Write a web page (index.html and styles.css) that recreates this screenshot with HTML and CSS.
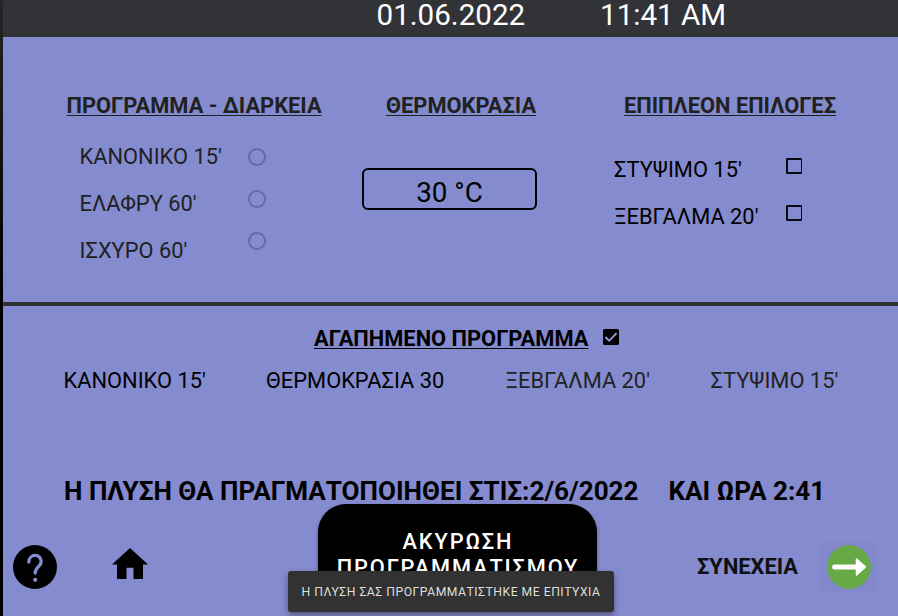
FILE: index.html
```html
<!DOCTYPE html>
<html lang="el">
<head>
<meta charset="utf-8">
<title>Πλυντήριο</title>
<link rel="stylesheet" href="styles.css">
</head>
<body>
<div class="screen">
  <header class="topbar"><span class="date">01.06.2022</span><span class="time">11:41 AM</span></header>
  <section class="settings">
    <div class="programs">
      <h2><span>ΠΡΟΓΡΑΜΜΑ - ΔΙΑΡΚΕΙΑ</span></h2>
      <div class="choices">
        <ul class="labels"><li>ΚΑΝΟΝΙΚΟ 15'</li><li>ΕΛΑΦΡΥ 60'</li><li>ΙΣΧΥΡΟ 60'</li></ul>
        <div class="radios"><i class="radio"></i><i class="radio"></i><i class="radio"></i></div>
      </div>
    </div>
    <div class="temperature">
      <h2><span>ΘΕΡΜΟΚΡΑΣΙΑ</span></h2>
      <div class="temp-value">30 °C</div>
    </div>
    <div class="extras">
      <h2><span>ΕΠΙΠΛΕΟΝ ΕΠΙΛΟΓΕΣ</span></h2>
      <div class="choices">
        <ul class="labels"><li>ΣΤΥΨΙΜΟ 15'</li><li>ΞΕΒΓΑΛΜΑ 20'</li></ul>
        <div class="checks"><i class="check"></i><i class="check"></i></div>
      </div>
    </div>
  </section>
  <section class="favorite">
    <div class="fav-title">
      <h2><span>ΑΓΑΠΗΜΕΝΟ ΠΡΟΓΡΑΜΜΑ</span></h2>
      <svg class="checked" viewBox="0 0 16 16"><rect width="16" height="16" rx="1.6"/><path d="M2.4 8 6.2 11.8 13.6 4.2" fill="none" stroke="#9a9fe0" stroke-width="1.8"/></svg>
    </div>
    <div class="fav-items"><span>ΚΑΝΟΝΙΚΟ 15'</span><span>ΘΕΡΜΟΚΡΑΣΙΑ 30</span><span class="off">ΞΕΒΓΑΛΜΑ 20'</span><span class="off">ΣΤΥΨΙΜΟ 15'</span></div>
  </section>
  <p class="notice"><span class="notice-day">Η ΠΛΥΣΗ ΘΑ ΠΡΑΓΜΑΤΟΠΟΙΗΘΕΙ ΣΤΙΣ:2/6/2022</span><span class="notice-time">ΚΑΙ ΩΡΑ 2:41</span></p>
  <footer class="actions">
    <svg class="help" viewBox="0 0 44 44"><circle cx="22" cy="22" r="22"/><path d="M15.8 17C16 8.3 28.2 8.3 28.2 16.5C28.2 21.8 22.2 21.5 22.2 28" fill="none" stroke="#858bcf" stroke-width="3.3" stroke-linecap="round"/><circle cx="22.2" cy="34.8" r="2.1" fill="#858bcf"/></svg>
    <svg class="home" viewBox="0 0 36 31"><path d="M18 0 36 16.4H31V31H21.5V19.7H14.5V31H5V16.4H0Z"/></svg>
    <button class="cancel">ΑΚΥΡΩΣΗ<br>ΠΡΟΓΡΑΜΜΑΤΙΣΜΟΥ</button>
    <span class="next-label">ΣΥΝΕΧΕΙΑ</span>
    <span class="next"><svg viewBox="0 0 44 44"><circle cx="22" cy="22" r="22" fill="#67a944"/><path d="M7.6 22H30" fill="none" stroke="#fff" stroke-width="5" stroke-linecap="round"/><path d="M29.5 14 38.5 22 29.5 30Z" fill="#fff" stroke="#fff" stroke-width="1.5" stroke-linejoin="round"/></svg></span>
  </footer>
</div>
<div class="toast">Η ΠΛΥΣΗ ΣΑΣ ΠΡΟΓΡΑΜΜΑΤΙΣΤΗΚΕ ΜΕ ΕΠΙΤΥΧΙΑ</div>
</body>
</html>
```
FILE: styles.css
```css
* { box-sizing: border-box; margin: 0; padding: 0; }
body {
  width: 898px; height: 616px; overflow: hidden; position: relative;
  background: linear-gradient(#252525, #000 300px);
  font: 21.85px/26px Roboto, sans-serif; color: #000; white-space: nowrap;
}
.screen { margin-left: 3px; height: 616px; background: #858bcf; overflow: hidden; }
svg { display: block; flex: none; }
ul { list-style: none; }
h2 { font-size: 21.85px; line-height: 26px; font-weight: 700; text-decoration: underline; text-decoration-thickness: 1px; text-underline-offset: 2px; }

.topbar { height: 37px; background: #323337; color: #fff; font-size: 29.6px; line-height: 30px; display: flex; padding-left: 373.5px; }
.date { width: 223.5px; }

.settings { height: 269px; border-bottom: 4px solid #323337; display: grid; grid-template-columns: 319px 255px 1fr; padding-top: 56px; color: #212121; }
.programs { padding-left: 63.5px; }
.temperature { padding-left: 40px; }
.temperature h2 { padding-left: 24px; }
.extras { padding-left: 37px; }
.extras h2 { padding-left: 10px; }
.choices { display: flex; }
.labels { display: flex; flex-direction: column; gap: 21px; }
.programs .labels { width: 182px; padding: 25px 0 0 13px; }
.radios { display: flex; flex-direction: column; gap: 24px; padding-top: 29px; }
.radio { width: 18px; height: 18px; margin-left: -0.5px; border: 2px solid #656b9e; border-radius: 50%; }
.temp-value { width: 175px; height: 42px; margin-top: 49px; border: 2px solid #000; border-radius: 6px; color: #000; font-size: 27.8px; line-height: 46px; text-align: center; }
.extras .labels { width: 172px; padding-top: 38px; color: #000; }
.checks { display: flex; flex-direction: column; gap: 31px; padding-top: 39px; }
.check { width: 16px; height: 16px; border: 2px solid #0a0a12; border-right-width: 1px; border-radius: 1px; }

.favorite { height: 154px; padding-top: 20px; }
.fav-title { display: flex; gap: 15px; padding-left: 311px; }
.checked { width: 16px; height: 16px; margin-top: 3px; }
.fav-items { display: grid; grid-template-columns: 202.5px 239.5px 205px 1fr; padding: 16px 0 0 60.5px; }
.off { color: #222; }

.notice { display: flex; height: 44px; padding: 16px 0 0 61px; font-size: 26.08px; line-height: 30px; font-weight: 700; }
.notice-day { width: 604.5px; }

.actions { height: 112px; display: flex; align-items: flex-start; }
.help { width: 44px; height: 44px; margin: 41px 0 0 10.3px; }
.home { width: 36px; height: 31px; margin: 44px 0 0 54.7px; }
.cancel { width: 279px; height: 100px; margin-left: 170px; padding: 2px 0 0 1px; flex: none; border: 0; border-radius: 28px; background: #000; color: #fff; font: 500 21.8px/26px Roboto, sans-serif; letter-spacing: 1.85px; box-shadow: 0 2px 4px #0005; }
.next-label { width: 123.5px; margin: 50px 0 0 100px; flex: none; font-weight: 700; color: #101010; }
.next { width: 58px; height: 51px; margin-top: 38px; padding: 3px 7px; flex: none; background: #8288cb; }
.next svg { width: 44px; height: 44px; }

.toast { position: absolute; left: 288px; top: 571px; width: 326px; height: 41px; border-radius: 3px; background: #323232; color: #dedede; font-size: 12.2px; line-height: 42px; letter-spacing: 0.5px; text-align: center; box-shadow: 0 3px 6px #0006; }
```
